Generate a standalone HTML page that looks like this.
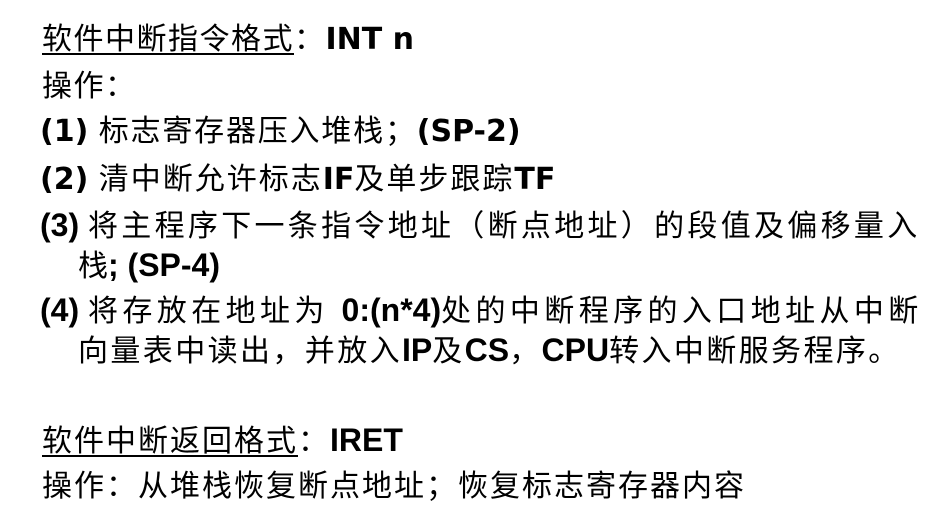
<!DOCTYPE html>
<html><head><meta charset="utf-8"><style>
body{margin:0;width:939px;height:522px;background:#fff;overflow:hidden;position:relative;}
.l{position:absolute;white-space:nowrap;font-family:"Liberation Sans","Noto Sans CJK SC",sans-serif;font-size:30px;line-height:30px;color:#000;}
.b{font-family:"DejaVu Sans",sans-serif;font-weight:bold;letter-spacing:0;}
.n{font-family:"Liberation Sans",sans-serif;font-weight:bold;letter-spacing:0;font-size:32px;}
u{text-decoration:underline;text-underline-offset:4px;text-decoration-thickness:2px;}
</style></head><body>
<div class="l" style="left:42px;top:25px;letter-spacing:1.5px"><u>软件中断指令格式</u>：<span class="b">INT n</span></div>
<div class="l" style="left:42px;top:72px;letter-spacing:1.5px">操作：</div>
<div class="l" style="left:40px;top:117px;letter-spacing:1.8px"><span class="b">(1) </span>标志寄存器压入堆栈；<span class="b">(SP-2)</span></div>
<div class="l" style="left:40px;top:165px;letter-spacing:2px"><span class="b">(2) </span>清中断允许标志<span class="b">IF</span>及单步跟踪<span class="b">TF</span></div>
<div class="l" style="left:40px;top:210px;letter-spacing:3.3px"><span class="n">(3) </span> 将主程序下一条指令地址（断点地址）的段值及偏移量入</div>
<div class="l" style="left:78px;top:250px;"><span>栈</span><span class="n">; (SP-4)</span></div>
<div class="l" style="left:40px;top:295px;letter-spacing:4.4px"><span class="n">(4) </span> 将存放在地址为 <span class="n">0:(n*4)</span>处的中断程序的入口地址从中断</div>
<div class="l" style="left:78px;top:335px;letter-spacing:2.4px">向量表中读出，并放入<span class="n">IP</span>及<span class="n">CS</span>，<span class="n">CPU</span>转入中断服务程序。</div>
<div class="l" style="left:42px;top:425px;letter-spacing:2px"><u>软件中断返回格式</u>：<span class="n">IRET</span></div>
<div class="l" style="left:42px;top:472px;letter-spacing:2px">操作：从堆栈恢复断点地址；恢复标志寄存器内容</div>
</body></html>
